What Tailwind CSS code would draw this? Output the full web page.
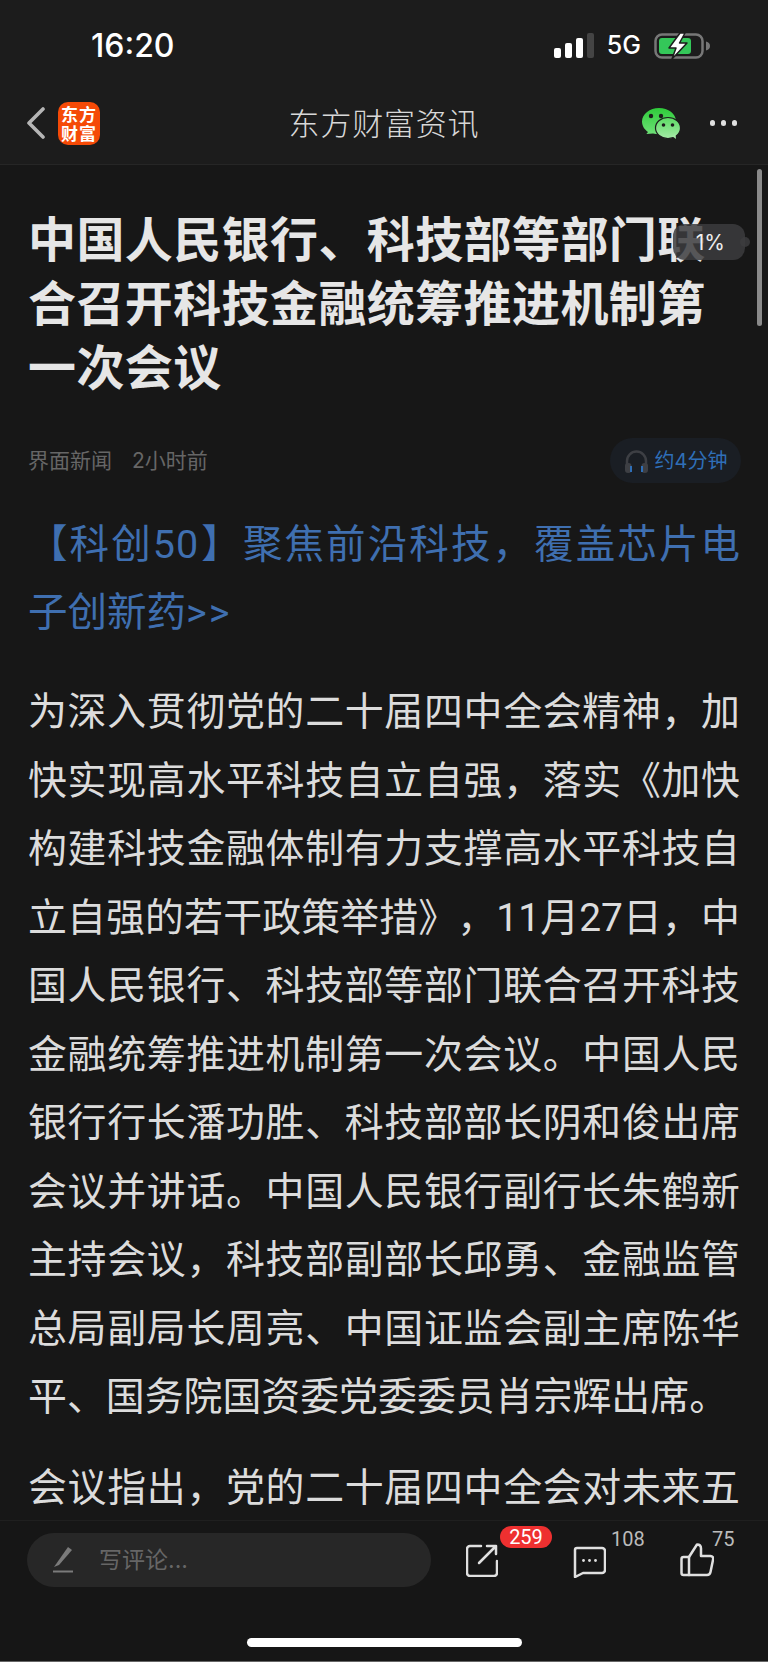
<!DOCTYPE html>
<html lang="zh-CN">
<head>
<meta charset="utf-8">
<script src="https://cdn.jsdelivr.net/npm/@tailwindcss/browser@4"></script>
</head>
<body class="bg-[#171717]">
<div class="w-[768px] h-[1662px] flex flex-col overflow-hidden bg-[#171717] font-['Inter','Noto_Sans_CJK_SC',sans-serif]">
  <header class="h-[165px] shrink-0 bg-[#1c1c1c] border-b border-[#262626]">
    <div class="h-[91px] flex items-center justify-between pl-[91px] pr-[57px]">
      <span class="text-[32px] font-medium text-white leading-none">16:20</span>
      <div class="flex items-center">
        <div class="flex items-end gap-[4px] h-[25px]">
          <span class="w-[7px] h-[10px] rounded-[2px] bg-white"></span>
          <span class="w-[7px] h-[15px] rounded-[2px] bg-white"></span>
          <span class="w-[7px] h-[20px] rounded-[2px] bg-white"></span>
          <span class="w-[7px] h-[25px] rounded-[2px] bg-[#444]"></span>
        </div>
        <span class="ml-[13px] text-[25px] font-medium text-white leading-none">5G</span>
        <svg class="ml-[13px]" width="57" height="28" viewBox="0 0 57 28">
          <rect x="1.500" y="2.500" width="47" height="23" rx="6.500" fill="none" stroke="#777" stroke-width="2.500"/>
          <path d="M52 9.500c3 .8 4 2.500 4 4.500s-1 3.700-4 4.500z" fill="#777"/>
          <rect x="5" y="6" width="32" height="16" rx="3" fill="#34c759"/>
          <path d="M26 1 L15 16 L22 16 L18 27 L33 11 L25.500 11 L31 1 Z" fill="#fff" stroke="#1c1c1c" stroke-width="1.500" stroke-linejoin="round"/>
        </svg>
      </div>
    </div>
    <div class="h-[64px] grid grid-cols-[1fr_auto_1fr] items-center">
      <div class="flex items-center pl-[26px]">
        <svg width="20" height="32" viewBox="0 0 20 32" fill="none">
          <path d="M17 2 L3 16 L17 30" stroke="#b5b5b5" stroke-width="3.600" stroke-linecap="round" stroke-linejoin="round"/>
        </svg>
        <div class="ml-[12px] w-[42px] h-[43px] rounded-[10px] bg-[#f54a07] flex flex-col items-center justify-center text-white font-bold text-[17px] leading-[19px] tracking-[1px] font-['Noto_Sans_CJK_SC',sans-serif]">
          <span>东方</span>
          <span>财富</span>
        </div>
      </div>
      <div class="text-[31px] tracking-[0.8px] font-light text-[#d8d8d8] leading-none">东方财富资讯</div>
      <div class="flex items-center justify-end pr-[31px]">
        <svg width="38" height="31" viewBox="0 0 38 31">
          <defs>
            <linearGradient id="wa" x1="0" y1="0" x2="0" y2="1"><stop offset="0" stop-color="#2ecb3a"/><stop offset="1" stop-color="#6fe077"/></linearGradient>
            <linearGradient id="wb" x1="0" y1="0" x2="0" y2="1"><stop offset="0" stop-color="#5bdb63"/><stop offset="1" stop-color="#a4eaa6"/></linearGradient>
          </defs>
          <path d="M17 0C7.800 0 0 6 0 13.500c0 4.300 2.400 8 6 10.400L4.400 26 11 25.400c2 .5 4 .8 6 .8 9.200 0 17-5.700 17-13S26.200 0 17 0z" fill="url(#wa)"/>
          <ellipse cx="26" cy="20" rx="12.500" ry="10.500" fill="url(#wb)" stroke="#1c1c1c" stroke-width="1.200"/>
          <path d="M30 28l4 3-.5-5z" fill="#a4eaa6"/>
          <circle cx="9" cy="8" r="2.200" fill="#1c1c1c"/><circle cx="19" cy="8" r="2.200" fill="#1c1c1c"/>
          <circle cx="21.500" cy="17" r="1.800" fill="#1c1c1c"/><circle cx="30.500" cy="17" r="1.800" fill="#1c1c1c"/>
        </svg>
        <div class="ml-[30px] flex gap-[5.500px]">
          <span class="w-[5.500px] h-[5.500px] rounded-full bg-[#e0e0e0]"></span>
          <span class="w-[5.500px] h-[5.500px] rounded-full bg-[#e0e0e0]"></span>
          <span class="w-[5.500px] h-[5.500px] rounded-full bg-[#e0e0e0]"></span>
        </div>
      </div>
    </div>
  </header>

  <main class="relative flex-1 overflow-hidden px-[28px] pt-[43px]">
    <h1 class="text-[48px] leading-[64px] tracking-[0.4px] font-bold text-[#e6e6e6]">中国人民银行、科技部等部门联合召开科技金融统筹推进机制第一次会议</h1>
    <div class="mt-[38px] h-[45px] flex items-center justify-between -mr-[1px]">
      <div class="text-[21px] text-[#666666] flex gap-[20px]"><span>界面新闻</span><span>2小时前</span></div>
      <div class="h-[45px] w-[131px] rounded-full bg-[#1a1e24] flex items-center justify-center gap-[6px]">
        <svg width="25" height="26" viewBox="0 0 25 26" fill="none">
          <path d="M3 20V13a9.500 9.500 0 0 1 19 0v7" stroke="#3d3f44" stroke-width="2.500"/>
          <rect x="1" y="15" width="6.500" height="10" rx="3" fill="#3d3f44"/>
          <rect x="17.500" y="15" width="6.500" height="10" rx="3" fill="#3d3f44"/>
          <path d="M7 18v6M18 18v6" stroke="#2f6fb8" stroke-width="2"/>
        </svg>
        <span class="text-[20px] text-[#2f6fb8] leading-none">约4分钟</span>
      </div>
    </div>
    <p class="mt-[28px] text-[39.500px] leading-[67.500px] text-[#3f6fb0] text-justify font-['Roboto','Noto_Sans_CJK_SC',sans-serif] [text-spacing-trim:space-all]">【科创<span class="tracking-[1px]">50</span>】聚焦前沿科技，覆盖芯片电子创新药<span class="tracking-[2px]">&gt;&gt;</span></p>
    <p class="mt-[32px] text-[38.900px] leading-[68.500px] text-[#dcdcdc] text-justify font-['Roboto','Noto_Sans_CJK_SC',sans-serif] [text-spacing-trim:space-all]">为深入贯彻党的二十届四中全会精神，加快实现高水平科技自立自强，落实《加快构建科技金融体制有力支撑高水平科技自立自强的若干政策举措》，11月27日，中国人民银行、科技部等部门联合召开科技金融统筹推进机制第一次会议。中国人民银行行长潘功胜、科技部部长阴和俊出席会议并讲话。中国人民银行副行长朱鹤新主持会议，科技部副部长邱勇、金融监管总局副局长周亮、中国证监会副主席陈华平、国务院国资委党委委员肖宗辉出席。</p>
    <p class="mt-[22px] text-[38.900px] leading-[68.500px] text-[#dcdcdc] text-justify [text-align-last:justify] font-['Roboto','Noto_Sans_CJK_SC',sans-serif]">会议指出，党的二十届四中全会对未来五</p>

    <div class="absolute right-[6px] top-[4px] w-[5px] h-[157px] rounded-full bg-[#8a8a8a]"></div>
    <div class="absolute left-[673px] top-[59px] w-[72px] h-[36px] rounded-[12px] bg-[#3c3c3e]/85 flex items-center justify-end pr-[20px] text-[21px] text-[#eeeeee] leading-none">
      1%
      <span class="absolute right-[-5px] top-[13px] w-[10px] h-[10px] rounded-full bg-[#3c3c3e]/85"></span>
    </div>
  </main>

  <footer class="h-[142px] shrink-0 bg-[#161616] border-t border-b border-t-[#1f1f1f] border-b-[#666666] flex flex-col">
    <div class="flex items-start pt-[12px] pl-[27px]">
      <div class="w-[404px] h-[54px] rounded-full bg-[#272727] flex items-center pl-[26px]">
        <svg width="20" height="26" viewBox="0 0 20 26">
          <path d="M15 0l4 3L6 18l-5 2z" fill="#7b7b7b"/>
          <rect x="0" y="23.500" width="20" height="2" fill="#7b7b7b"/>
        </svg>
        <span class="ml-[26px] text-[23px] text-[#666666] leading-none">写评论...</span>
      </div>
      <div class="relative ml-[35px] mt-[11px] w-[32px] h-[33px]">
        <svg width="32" height="33" viewBox="0 0 32 33" fill="none" stroke="#e0e0e0" stroke-width="2.500" stroke-linecap="round" stroke-linejoin="round">
          <path d="M15 2H4a3 3 0 0 0-3 3v24a3 3 0 0 0 3 3h24a3 3 0 0 0 3-3V17"/>
          <path d="M13 19L30 2M21 2h9v8"/>
        </svg>
        <span class="absolute left-[34px] top-[-18px] w-[52px] h-[22px] rounded-full bg-[#ee3030] text-white text-[20px] leading-[22px] text-center font-['Roboto',sans-serif]">259</span>
      </div>
      <div class="relative ml-[75px] mt-[13px] w-[33px] h-[32px]">
        <svg width="33" height="32" viewBox="0 0 33 32" fill="none" stroke="#e0e0e0" stroke-width="2.500" stroke-linejoin="round">
          <path d="M4 2h25a3 3 0 0 1 3 3v19a3 3 0 0 1-3 3H10l-8 4V4a2 2 0 0 1 2-2z"/>
          <circle cx="10.500" cy="14.500" r="1.400" fill="#e0e0e0" stroke="none"/>
          <circle cx="16.500" cy="14.500" r="1.400" fill="#e0e0e0" stroke="none"/>
          <circle cx="22.500" cy="14.500" r="1.400" fill="#e0e0e0" stroke="none"/>
        </svg>
        <span class="absolute left-[38px] top-[-17px] text-[20px] text-[#bbbbbb] leading-none font-['Roboto',sans-serif]">108</span>
      </div>
      <div class="relative ml-[74px] mt-[10px] w-[34px] h-[34px]">
        <svg width="34" height="34" viewBox="0 0 34 34" fill="none" stroke="#e0e0e0" stroke-width="2.500" stroke-linejoin="round" stroke-linecap="round">
          <path d="M9 14L17 1.500c2.500 0 4 1.500 4 4V13h9.500c2 0 3 1.500 2.600 3.500L30.500 29c-.4 2-1.500 3-3.500 3H9z"/>
          <path d="M9 14H3.500A2 2 0 0 0 1.500 16v14a2 2 0 0 0 2 2H9"/>
        </svg>
        <span class="absolute left-[32px] top-[-14px] text-[20px] text-[#bbbbbb] leading-none font-['Roboto',sans-serif]">75</span>
      </div>
    </div>
    <div class="mt-[51px] ml-[247px] w-[275px] h-[9px] rounded-full bg-white"></div>
  </footer>
</div>
</body>
</html>
